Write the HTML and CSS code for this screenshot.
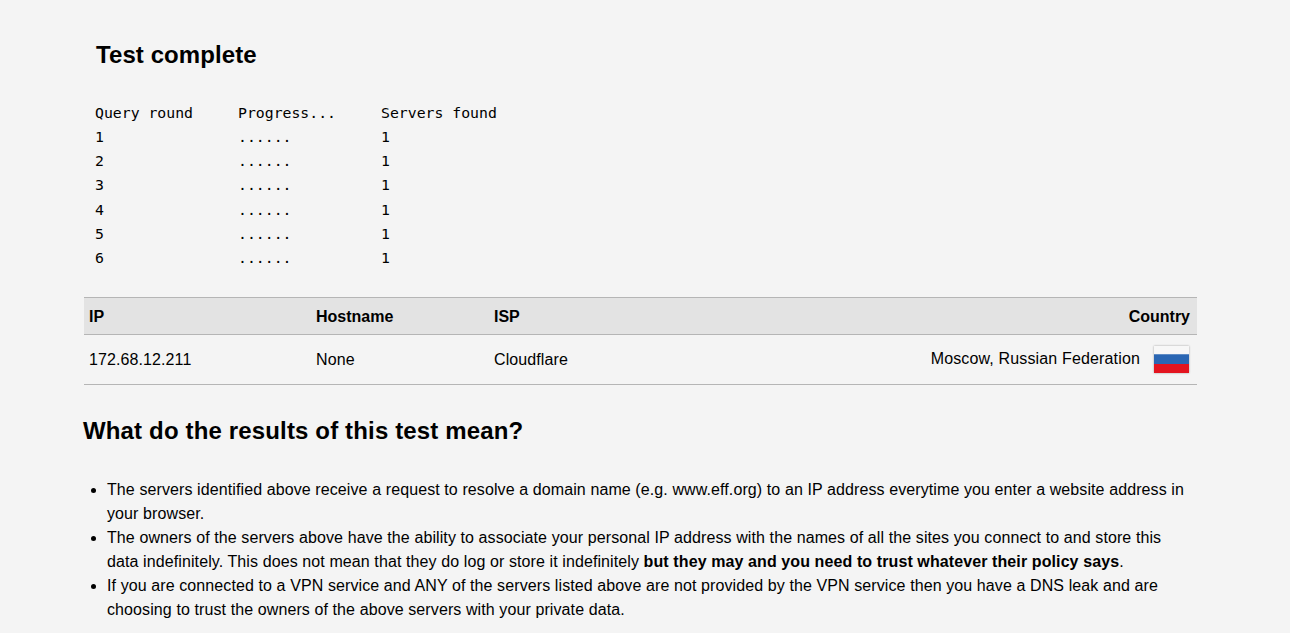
FILE: index.html
```html
<!DOCTYPE html>
<html lang="en">
<head>
<meta charset="utf-8">
<title>DNS leak test</title>
<link rel="stylesheet" href="styles.css">
</head>
<body>
<main class="page">
  <h2 class="title">Test complete</h2>
  <div class="rounds">
    <div class="row"><span>Query round</span><span>Progress...</span><span>Servers found</span></div>
    <div class="row"><span>1</span><span>......</span><span>1</span></div>
    <div class="row"><span>2</span><span>......</span><span>1</span></div>
    <div class="row"><span>3</span><span>......</span><span>1</span></div>
    <div class="row"><span>4</span><span>......</span><span>1</span></div>
    <div class="row"><span>5</span><span>......</span><span>1</span></div>
    <div class="row"><span>6</span><span>......</span><span>1</span></div>
  </div>
  <table class="servers">
    <thead>
      <tr><th class="c-ip">IP</th><th class="c-host">Hostname</th><th class="c-isp">ISP</th><th class="c-country">Country</th></tr>
    </thead>
    <tbody>
      <tr>
        <td>172.68.12.211</td><td>None</td><td>Cloudflare</td>
        <td class="c-country"><span class="place">Moscow, Russian Federation</span><span class="flag"></span></td>
      </tr>
    </tbody>
  </table>
  <h2 class="subtitle">What do the results of this test mean?</h2>
  <ul class="notes">
    <li>The servers identified above receive a request to resolve a domain name (e.g. www.eff.org) to an IP address everytime you enter a website address in your browser.</li>
    <li>The owners of the servers above have the ability to associate your personal IP address with the names of all the sites you connect to and store this data indefinitely. This does not mean that they do log or store it indefinitely <strong>but they may and you need to trust whatever their policy says</strong>.</li>
    <li>If you are connected to a VPN service and ANY of the servers listed above are not provided by the VPN service then you have a DNS leak and are choosing to trust the owners of the above servers with your private data.</li>
  </ul>
</main>
</body>
</html>
```
FILE: styles.css
```css
html, body {
  margin: 0;
  padding: 0;
  height: 633px;
  overflow: hidden;
  background: #f4f4f4;
  color: #000;
  font-family: "Liberation Sans", Arial, sans-serif;
  font-size: 16px;
}
.page {
  width: 1113px;
  margin-left: 84px;
}
.title {
  margin: 0;
  padding: 41px 0 0 12px;
  font-size: 24px;
  line-height: 28px;
  font-weight: bold;
  letter-spacing: 0.08px;
}
.rounds {
  margin: 32px 0 0 11px;
  font-family: "DejaVu Sans Mono", monospace;
  font-size: 14.8px;
  line-height: 24.12px;
}
.row {
  display: grid;
  grid-template-columns: 143px 143px 1fr;
}
.servers {
  width: 100%;
  margin-top: 27.2px;
  border-collapse: collapse;
  table-layout: fixed;
}
.servers th {
  box-sizing: border-box;
  height: 37px;
  padding: 1px 7px 0 5px;
  text-align: left;
  font-weight: bold;
  background: #e3e3e3;
  border-top: 1px solid #b5b5b5;
  border-bottom: 1px solid #b5b5b5;
}
.servers td {
  height: 49px;
  padding: 0 8px 0 5px;
  letter-spacing: 0.1px;
  border-bottom: 1px solid #b5b5b5;
}
.c-ip { width: 227px; }
.c-host { width: 178px; }
.c-isp { width: 180px; }
.servers .c-country { text-align: right; }
.place { margin-right: 14px; vertical-align: middle; position: relative; top: -1px; letter-spacing: 0.15px; }
.flag {
  display: inline-block;
  vertical-align: middle;
  width: 35px;
  height: 27px;
  background: linear-gradient(#f7f7f7 0 30%, #2a66b3 32% 65%, #e3141f 67% 100%);
  box-shadow: 0 0 2px rgba(0, 0, 0, 0.35);
}
.subtitle {
  margin: 32px 0 0 -1px;
  font-size: 24px;
  line-height: 28px;
  font-weight: bold;
  letter-spacing: 0.15px;
}
.notes {
  margin: 33px 0 0;
  padding: 0 10px 0 23px;
  line-height: 24px;
  letter-spacing: 0.1px;
}
```
